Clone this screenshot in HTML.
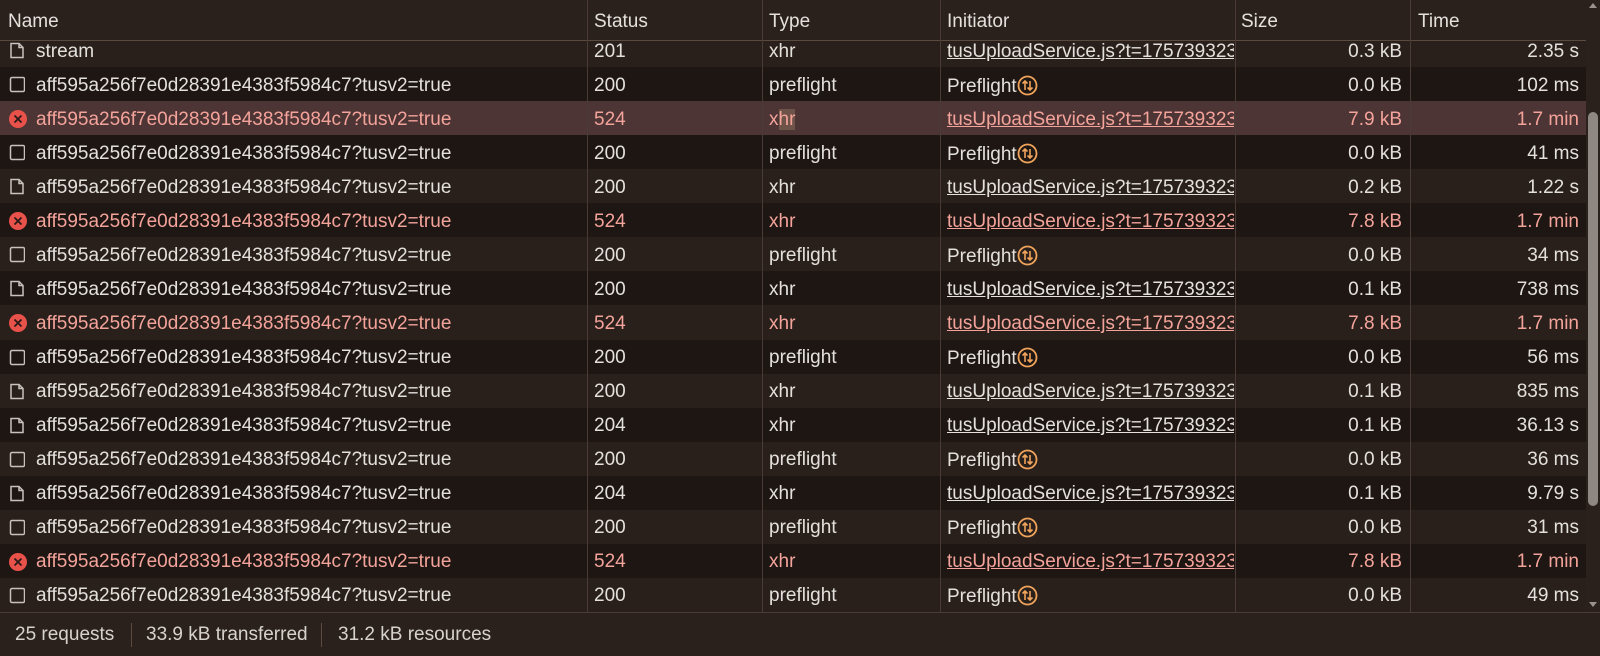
<!DOCTYPE html>
<html><head><meta charset="utf-8"><style>
*{margin:0;padding:0;box-sizing:border-box}
body{width:1600px;height:656px;background:#2a211d;font-family:"Liberation Sans",sans-serif;font-size:19px;color:#e4e0dc;overflow:hidden;position:relative}
.hdr{position:absolute;left:0;top:0;width:1586px;height:41px;background:#2a211d;border-bottom:1px solid #5b4a40;z-index:2}
.hdr b{position:absolute;top:11px;font-weight:normal}
.vl{position:absolute;width:1px;background:#4a3c34;top:0;height:612px;z-index:3}
.row{position:absolute;left:0;width:1586px;height:34.1px;overflow:hidden}
.l{background:#29201c}.d{background:#1d1613}.s{background:#4d3435}
.row i{position:absolute;top:7.5px;white-space:nowrap;font-style:normal}
.c1{left:36px}.c2{left:594px}.c3{left:769px}.c4{left:947px}
.c5{right:184px}.c6{right:7px}
.u{text-decoration:underline;width:287px;overflow:hidden}
.err{color:#f4a39a}
.ic{position:absolute;left:9px;top:9px}
.foot{position:absolute;left:0;top:612px;width:1600px;height:44px;background:#2a211d;border-top:1px solid #4a3c34;color:#d8d2cc}
.foot i{position:absolute;top:11px;font-style:normal}
.sb{position:absolute;left:1586px;top:0;width:14px;height:612px;background:#2a211d}
</style></head><body>
<svg width="0" height="0" style="position:absolute">
<defs>
<symbol id="f" viewBox="0 0 16 17"><path d="M2 1.5h8l4 4v10H2z M10 1.5v4h4" fill="none" stroke="#c9c2bc" stroke-width="1.5"/></symbol>
<symbol id="b" viewBox="0 0 16 17"><rect x="1.5" y="1.5" width="14" height="14" rx="1.5" fill="none" stroke="#c9c2bc" stroke-width="1.5"/></symbol>
<symbol id="e" viewBox="0 0 20 20"><circle cx="10" cy="10" r="9" fill="#e9524a"/><path d="M6.5 6.5l7 7M13.5 6.5l-7 7" stroke="#2a1a18" stroke-width="1.8"/></symbol>
<symbol id="p" viewBox="0 0 21 21"><circle cx="10.5" cy="10.5" r="9" fill="none" stroke="#f0a35a" stroke-width="1.8"/><path d="M8 15V6M5.5 8.5L8 6l2.5 2.5M13 6v9M10.5 12.5L13 15l2.5-2.5" fill="none" stroke="#f0a35a" stroke-width="1.6"/></symbol>
</defs></svg>
<div class="hdr"><b style="left:8px">Name</b><b style="left:594px">Status</b><b style="left:769px">Type</b><b style="left:947px">Initiator</b><b style="left:1241px">Size</b><b style="left:1418px">Time</b></div>

<div class="row l" style="top:33px"><svg class="ic" width="16" height="17"><use href="#f"/></svg><i class="c1">stream</i><i class="c2">201</i><i class="c3">xhr</i><i class="c4 u">tusUploadService.js?t=175739323</i><i class="c5">0.3 kB</i><i class="c6">2.35 s</i></div>
<div class="row d" style="top:67.06px"><svg class="ic" width="16" height="17"><use href="#b"/></svg><i class="c1">aff595a256f7e0d28391e4383f5984c7?tusv2=true</i><i class="c2">200</i><i class="c3">preflight</i><i class="c4">Preflight<svg style="vertical-align:-4px" width="21" height="21"><use href="#p"/></svg></i><i class="c5">0.0 kB</i><i class="c6">102 ms</i></div>
<div class="row s err" style="top:101.12px"><svg class="ic" style="left:8px;top:8px" width="20" height="20"><use href="#e"/></svg><i class="c1">aff595a256f7e0d28391e4383f5984c7?tusv2=true</i><i class="c2">524</i><i class="c3">x<span style="background:#6d5348">hr</span></i><i class="c4 u">tusUploadService.js?t=175739323</i><i class="c5">7.9 kB</i><i class="c6">1.7 min</i></div>
<div class="row d" style="top:135.18px"><svg class="ic" width="16" height="17"><use href="#b"/></svg><i class="c1">aff595a256f7e0d28391e4383f5984c7?tusv2=true</i><i class="c2">200</i><i class="c3">preflight</i><i class="c4">Preflight<svg style="vertical-align:-4px" width="21" height="21"><use href="#p"/></svg></i><i class="c5">0.0 kB</i><i class="c6">41 ms</i></div>
<div class="row l" style="top:169.24px"><svg class="ic" width="16" height="17"><use href="#f"/></svg><i class="c1">aff595a256f7e0d28391e4383f5984c7?tusv2=true</i><i class="c2">200</i><i class="c3">xhr</i><i class="c4 u">tusUploadService.js?t=175739323</i><i class="c5">0.2 kB</i><i class="c6">1.22 s</i></div>
<div class="row d err" style="top:203.3px"><svg class="ic" style="left:8px;top:8px" width="20" height="20"><use href="#e"/></svg><i class="c1">aff595a256f7e0d28391e4383f5984c7?tusv2=true</i><i class="c2">524</i><i class="c3">xhr</i><i class="c4 u">tusUploadService.js?t=175739323</i><i class="c5">7.8 kB</i><i class="c6">1.7 min</i></div>
<div class="row l" style="top:237.36px"><svg class="ic" width="16" height="17"><use href="#b"/></svg><i class="c1">aff595a256f7e0d28391e4383f5984c7?tusv2=true</i><i class="c2">200</i><i class="c3">preflight</i><i class="c4">Preflight<svg style="vertical-align:-4px" width="21" height="21"><use href="#p"/></svg></i><i class="c5">0.0 kB</i><i class="c6">34 ms</i></div>
<div class="row d" style="top:271.42px"><svg class="ic" width="16" height="17"><use href="#f"/></svg><i class="c1">aff595a256f7e0d28391e4383f5984c7?tusv2=true</i><i class="c2">200</i><i class="c3">xhr</i><i class="c4 u">tusUploadService.js?t=175739323</i><i class="c5">0.1 kB</i><i class="c6">738 ms</i></div>
<div class="row l err" style="top:305.48px"><svg class="ic" style="left:8px;top:8px" width="20" height="20"><use href="#e"/></svg><i class="c1">aff595a256f7e0d28391e4383f5984c7?tusv2=true</i><i class="c2">524</i><i class="c3">xhr</i><i class="c4 u">tusUploadService.js?t=175739323</i><i class="c5">7.8 kB</i><i class="c6">1.7 min</i></div>
<div class="row d" style="top:339.54px"><svg class="ic" width="16" height="17"><use href="#b"/></svg><i class="c1">aff595a256f7e0d28391e4383f5984c7?tusv2=true</i><i class="c2">200</i><i class="c3">preflight</i><i class="c4">Preflight<svg style="vertical-align:-4px" width="21" height="21"><use href="#p"/></svg></i><i class="c5">0.0 kB</i><i class="c6">56 ms</i></div>
<div class="row l" style="top:373.6px"><svg class="ic" width="16" height="17"><use href="#f"/></svg><i class="c1">aff595a256f7e0d28391e4383f5984c7?tusv2=true</i><i class="c2">200</i><i class="c3">xhr</i><i class="c4 u">tusUploadService.js?t=175739323</i><i class="c5">0.1 kB</i><i class="c6">835 ms</i></div>
<div class="row d" style="top:407.66px"><svg class="ic" width="16" height="17"><use href="#f"/></svg><i class="c1">aff595a256f7e0d28391e4383f5984c7?tusv2=true</i><i class="c2">204</i><i class="c3">xhr</i><i class="c4 u">tusUploadService.js?t=175739323</i><i class="c5">0.1 kB</i><i class="c6">36.13 s</i></div>
<div class="row l" style="top:441.72px"><svg class="ic" width="16" height="17"><use href="#b"/></svg><i class="c1">aff595a256f7e0d28391e4383f5984c7?tusv2=true</i><i class="c2">200</i><i class="c3">preflight</i><i class="c4">Preflight<svg style="vertical-align:-4px" width="21" height="21"><use href="#p"/></svg></i><i class="c5">0.0 kB</i><i class="c6">36 ms</i></div>
<div class="row d" style="top:475.78px"><svg class="ic" width="16" height="17"><use href="#f"/></svg><i class="c1">aff595a256f7e0d28391e4383f5984c7?tusv2=true</i><i class="c2">204</i><i class="c3">xhr</i><i class="c4 u">tusUploadService.js?t=175739323</i><i class="c5">0.1 kB</i><i class="c6">9.79 s</i></div>
<div class="row l" style="top:509.84px"><svg class="ic" width="16" height="17"><use href="#b"/></svg><i class="c1">aff595a256f7e0d28391e4383f5984c7?tusv2=true</i><i class="c2">200</i><i class="c3">preflight</i><i class="c4">Preflight<svg style="vertical-align:-4px" width="21" height="21"><use href="#p"/></svg></i><i class="c5">0.0 kB</i><i class="c6">31 ms</i></div>
<div class="row d err" style="top:543.9px"><svg class="ic" style="left:8px;top:8px" width="20" height="20"><use href="#e"/></svg><i class="c1">aff595a256f7e0d28391e4383f5984c7?tusv2=true</i><i class="c2">524</i><i class="c3">xhr</i><i class="c4 u">tusUploadService.js?t=175739323</i><i class="c5">7.8 kB</i><i class="c6">1.7 min</i></div>
<div class="row l" style="top:577.96px"><svg class="ic" width="16" height="17"><use href="#b"/></svg><i class="c1">aff595a256f7e0d28391e4383f5984c7?tusv2=true</i><i class="c2">200</i><i class="c3">preflight</i><i class="c4">Preflight<svg style="vertical-align:-4px" width="21" height="21"><use href="#p"/></svg></i><i class="c5">0.0 kB</i><i class="c6">49 ms</i></div>

<div class="vl" style="left:587px"></div>
<div class="vl" style="left:762px"></div>
<div class="vl" style="left:940px"></div>
<div class="vl" style="left:1235px"></div>
<div class="vl" style="left:1410px"></div>
<div class="sb">
<div style="position:absolute;left:3px;top:3px;width:0;height:0;border-left:4px solid transparent;border-right:4px solid transparent;border-bottom:5px solid #9a928c"></div>
<div style="position:absolute;left:2px;top:112px;width:10px;height:394px;background:#8e8782;border-radius:5px"></div>
<div style="position:absolute;left:3px;top:602px;width:0;height:0;border-left:4px solid transparent;border-right:4px solid transparent;border-top:5px solid #9a928c"></div>
</div>
<div class="foot">
<i style="left:15px">25 requests</i>
<div style="position:absolute;left:131px;top:10px;width:1px;height:24px;background:#5b4a40"></div>
<i style="left:146px">33.9 kB transferred</i>
<div style="position:absolute;left:321px;top:10px;width:1px;height:24px;background:#5b4a40"></div>
<i style="left:338px">31.2 kB resources</i>
</div>
</body></html>
